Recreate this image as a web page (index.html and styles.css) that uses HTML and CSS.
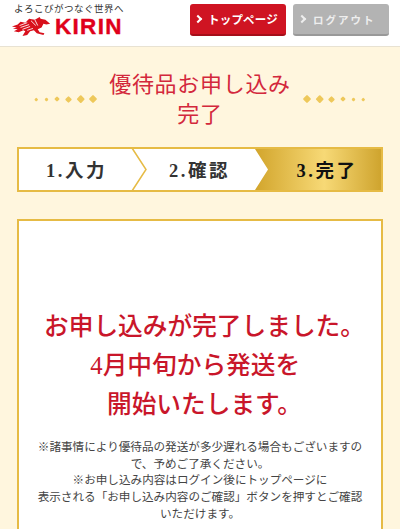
FILE: index.html
```html
<!DOCTYPE html>
<html lang="ja">
<head>
<meta charset="utf-8">
<title>優待品お申し込み完了</title>
<link rel="stylesheet" href="styles.css">
</head>
<body>
<header class="header">
  <div class="brand">
    <div class="tagline">よろこびがつなぐ世界へ</div>
    <div class="logo">
      <svg class="kirin" viewBox="0 0 44 22" width="42" height="21" aria-hidden="true">
        <path fill="#d8101c" d="M1 11 7 9l3-3 5 1 4-4 6 1 5-3 1 2 5 1 5 4-4 1-3-1-2 4-4 2 2 3 5 1-1 2-7-2-3-3-4 1-3 4-5 1 3-5-2-1-5 2-5-1 4-2-5-1 4-1z"/>
        <path fill="none" stroke="#fff" stroke-width=".9" d="M9 10l8-3M10 12l9-3M12 14l8-3M21 5l5 5M25 4l3 6M17 15l6-2"/>
      </svg>
      <span class="wordmark">KIRIN</span>
    </div>
  </div>
  <nav class="nav">
    <a class="btn btn-red"><span class="chev"></span>トップページ</a>
    <a class="btn btn-gray"><span class="chev"></span>ログアウト</a>
  </nav>
</header>

<main class="main">
  <div class="title-row">
    <div class="dots">
      <i class="d1"></i><i class="d2"></i><i class="d3"></i><i class="d4"></i><i class="d5"></i><i class="d6"></i>
    </div>
    <h1 class="title">優待品お申し込み<br>完了</h1>
    <div class="dots dots-rev">
      <i class="d1"></i><i class="d2"></i><i class="d3"></i><i class="d4"></i><i class="d5"></i><i class="d6"></i>
    </div>
  </div>

  <div class="steps">
    <div class="step step-a">1.入力</div>
    <div class="step step-b">2.確認</div>
    <div class="step step-c">3.完了</div>
    <svg class="arrows" viewBox="0 0 366 45" width="366" height="45" aria-hidden="true">
      <path fill="none" stroke="#e6bb45" stroke-width="1.5" d="M115 1l14 21.500L115 44"/>
    </svg>
  </div>

  <section class="card">
    <p class="lead">お申し込みが完了しました。<br>4月中旬から発送を&nbsp;&nbsp;&nbsp;<br>開始いたします。</p>
    <p class="note">※諸事情により優待品の発送が多少遅れる場合もございますので、予めご了承ください。<br>※お申し込み内容はログイン後にトップページに<br>表示される「お申し込み内容のご確認」ボタンを押すとご確認いただけます。</p>
  </section>
</main>
</body>
</html>
```
FILE: styles.css
```css
* { box-sizing: border-box; }
html, body { margin: 0; padding: 0; }
body {
  width: 400px;
  height: 529px;
  overflow: hidden;
  background: #fff6de;
  font-family: "Noto Sans CJK JP", "Liberation Sans", sans-serif;
}
.header {
  height: 47px;
  background: #fff;
  border-bottom: 1px solid #e8e2d2;
  display: flex;
  justify-content: space-between;
  padding: 2px 11px 0 11px;
}
.tagline {
  font-size: 9.500px;
  line-height: 12px;
  color: #333;
  letter-spacing: .5px;
  padding-left: 3px;
  white-space: nowrap;
}
.logo { display: flex; align-items: center; margin-top: 2px; }
.kirin { display: block; margin-right: 2px; }
.wordmark {
  font-family: "Liberation Sans", sans-serif;
  font-weight: 700;
  font-size: 22.500px;
  letter-spacing: 1.300px;
  line-height: 21px;
  color: #e0001b;
  -webkit-text-stroke: .4px #e0001b;
}
.nav { display: flex; gap: 7px; padding-top: 2px; }
.btn {
  width: 96px;
  height: 32px;
  border-radius: 3px;
  color: #fff;
  font-weight: 700;
  display: flex;
  align-items: center;
  white-space: nowrap;
}
.btn-red {
  background: #cf1422;
  border-bottom: 2px solid #a50e19;
  font-size: 11.500px;
  letter-spacing: .2px;
  padding-left: 5px;
}
.btn-gray {
  background: #b3b3b3;
  border-bottom: 2px solid #999;
  color: #eee;
  font-size: 10.500px;
  letter-spacing: 2px;
  padding-left: 6px;
}
.chev {
  width: 6px;
  height: 6px;
  border-top: 2px solid currentColor;
  border-right: 2px solid currentColor;
  transform: rotate(45deg);
  margin-right: 7px;
  flex: none;
}
.btn-gray .chev { margin-right: 8px; }
.main { padding: 0 17px; }
.title-row {
  display: flex;
  justify-content: space-between;
  align-items: center;
  height: 100px;
  padding: 0 18px;
}
.title {
  margin: 0;
  font-weight: 400;
  font-size: 22px;
  line-height: 30px;
  letter-spacing: .7px;
  color: #d3283c;
  text-align: center;
  white-space: nowrap;
}
.dots { display: flex; align-items: center; gap: 7px; margin-top: 4px; }
.dots-rev { flex-direction: row-reverse; }
.dots i { display: block; background: #eec85a; transform: rotate(45deg); border-radius: 1px; }
.dots .d1 { width: 2.500px; height: 2.500px; }
.dots .d2 { width: 3px; height: 3px; }
.dots .d3 { width: 4px; height: 4px; }
.dots .d4 { width: 5px; height: 5px; }
.dots .d5 { width: 5.500px; height: 5.500px; }
.dots .d6 { width: 6px; height: 6px; }
.steps {
  position: relative;
  height: 45px;
  display: flex;
  border: 2px solid #e6bb45;
  background: #fff;
  margin-bottom: 27px;
}
.arrows { position: absolute; left: -2px; top: -2px; }
.step {
  display: flex;
  align-items: center;
  justify-content: center;
  padding-bottom: 2px;
  font-family: "Liberation Serif", "Noto Sans CJK JP", serif;
  font-size: 18.500px;
  font-weight: 700;
  letter-spacing: 2.500px;
  color: #333;
}
.step-a { width: 115px; }
.step-b { width: 121px; padding-left: 10px; }
.step-c {
  flex: 1;
  color: #111;
  padding-left: 18px;
  background: linear-gradient(90deg, #d2a52c 0%, #f7d976 55%, #cfa42e 100%);
  clip-path: polygon(0 0, 100% 0, 100% 100%, 0 100%, 13px 50%);
}
.card {
  background: #fff;
  border: 2px solid #e6bb45;
  border-bottom: 0;
  height: 320px;
  padding: 86px 16px 0;
  text-align: center;
}
.lead {
  margin: 0 0 14px;
  padding-left: 9px;
  font-family: "Liberation Serif", "Noto Sans CJK JP", serif;
  font-size: 24.700px;
  line-height: 39px;
  font-weight: 500;
  color: #c9162a;
  white-space: nowrap;
}
.note {
  margin: 0 -2px;
  font-size: 11.600px;
  line-height: 16.700px;
  color: #444;
}
```
